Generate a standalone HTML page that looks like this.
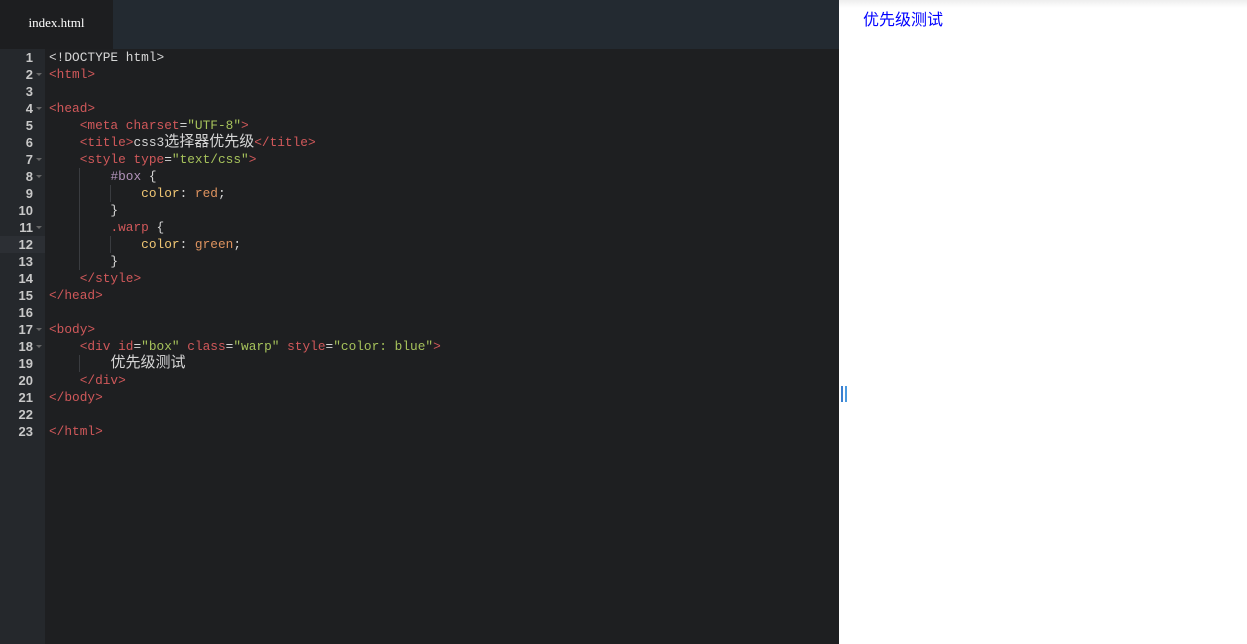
<!DOCTYPE html>
<html><head><meta charset="utf-8"><style>
body{margin:0;width:1247px;height:644px;overflow:hidden;background:#fff;position:relative;font-family:"Liberation Mono","Noto Sans CJK SC",monospace}
.top{position:absolute;left:0;top:0;width:839px;height:49px;background:#232a31}
.tab{position:absolute;left:0;top:0;width:113px;height:49px;background:#1d1e20;color:#fff;font:13px "Liberation Serif",serif;line-height:46px;text-align:center}
.ed{position:absolute;left:0;top:49px;width:839px;height:595px;background:#1e1f21}
.gut{position:absolute;left:0;top:0;width:45px;height:595px;background:#25282c}
.ln{position:absolute;left:0;width:33px;text-align:right;color:#c8c8c8;font-size:13px;font-weight:bold;font-family:"Liberation Sans","DejaVu Sans",sans-serif}
.code{position:absolute;left:49px;top:0;font-size:12.8px;line-height:17px;color:#d6d6d6}
.code div{height:17px;white-space:pre}
.c{font-size:15px;line-height:17px;vertical-align:top}
.t{color:#d0585a}.s{color:#a6c25b}.y{color:#f0c674}.o{color:#de935f}.p{color:#b294bb}
.g{position:absolute;width:1px;background:#3a3c40}
.fold{position:absolute;left:36px;width:0;height:0;border-left:3px solid transparent;border-right:3px solid transparent;border-top:3px solid #666}
.prev{position:absolute;left:863px;top:6px;color:#00f;font:16px "Liberation Sans","Noto Sans CJK SC",sans-serif}
.shadow{position:absolute;left:839px;top:0;width:408px;height:8px;background:linear-gradient(#eee,#fff)}
</style></head><body>
<div class="top"><div class="tab">index.html</div></div>
<div class="ed">
<div class="gut"></div>
<div style="position:absolute;left:0;top:187px;width:45px;height:17px;background:#2c2f34"></div>
<div class="ln" style="top:0px;line-height:17px">1<br>2<br>3<br>4<br>5<br>6<br>7<br>8<br>9<br>10<br>11<br>12<br>13<br>14<br>15<br>16<br>17<br>18<br>19<br>20<br>21<br>22<br>23</div>
<div class="fold" style="top:24px"></div><div class="fold" style="top:58px"></div><div class="fold" style="top:109px"></div><div class="fold" style="top:126px"></div><div class="fold" style="top:177px"></div><div class="fold" style="top:279px"></div><div class="fold" style="top:296px"></div>
<div class="g" style="left:79px;top:119px;height:102px"></div>
<div class="g" style="left:110px;top:136px;height:17px"></div>
<div class="g" style="left:110px;top:187px;height:17px"></div>
<div class="g" style="left:79px;top:306px;height:17px"></div>
<div class="code"><div>&lt;!DOCTYPE html&gt;</div><div><span class="t">&lt;html&gt;</span></div><div></div><div><span class="t">&lt;head&gt;</span></div><div>    <span class="t">&lt;meta charset</span>=<span class="s">"UTF-8"</span><span class="t">&gt;</span></div><div>    <span class="t">&lt;title&gt;</span>css3<span class="c">选择器优先级</span><span class="t">&lt;/title&gt;</span></div><div>    <span class="t">&lt;style type</span>=<span class="s">"text/css"</span><span class="t">&gt;</span></div><div>        <span class="p">#box</span> {</div><div>            <span class="y">color</span>: <span class="o">red</span>;</div><div>        }</div><div>        <span class="t">.warp</span> {</div><div>            <span class="y">color</span>: <span class="o">green</span>;</div><div>        }</div><div>    <span class="t">&lt;/style&gt;</span></div><div><span class="t">&lt;/head&gt;</span></div><div></div><div><span class="t">&lt;body&gt;</span></div><div>    <span class="t">&lt;div id</span>=<span class="s">"box"</span> <span class="t">class</span>=<span class="s">"warp"</span> <span class="t">style</span>=<span class="s">"color: blue"</span><span class="t">&gt;</span></div><div>        <span class="c">优先级测试</span></div><div>    <span class="t">&lt;/div&gt;</span></div><div><span class="t">&lt;/body&gt;</span></div><div></div><div><span class="t">&lt;/html&gt;</span></div></div>
</div>
<div class="shadow"></div>
<div class="prev">优先级测试</div>
<div style="position:absolute;left:841px;top:386px;width:2px;height:16px;background:#3a7fd0"></div>
<div style="position:absolute;left:845px;top:386px;width:2px;height:16px;background:#4a9ae0"></div>
</body></html>
